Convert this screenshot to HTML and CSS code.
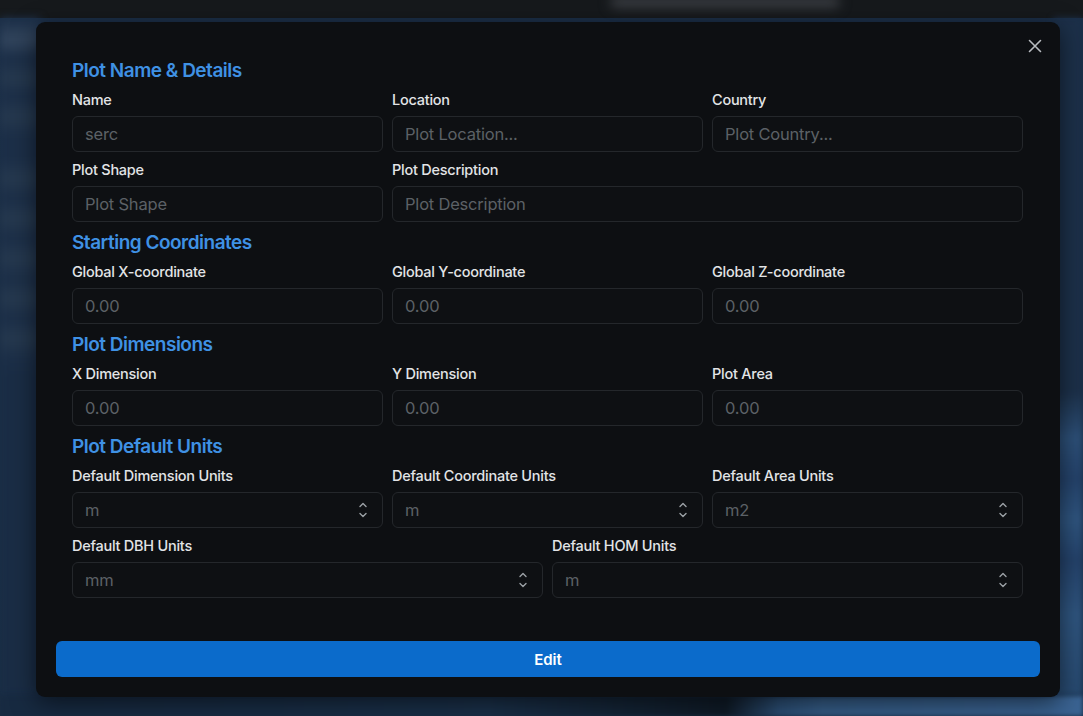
FILE: index.html
```html
<!DOCTYPE html>
<html lang="en">
<head>
<meta charset="utf-8">
<title>Edit Plot</title>
<link rel="stylesheet" href="styles.css">
</head>
<body>
<div class="backdrop">
  <div class="bd-top"><div class="bd-top-blob"></div></div>
  <div class="bd-main">
    <div class="bd-side"></div>
    <div class="bd-right"></div>
  </div>
  <div class="bd-bottom"></div>
</div>
<div class="overlay">
  <div class="modal">
    <button class="close" aria-label="Close">
      <svg width="14" height="14" viewBox="0 0 14 14"><path d="M1.5 1.5 L12.5 12.5 M12.5 1.5 L1.5 12.5" stroke="#b8bcc0" stroke-width="1.6" stroke-linecap="round" fill="none"/></svg>
    </button>
    <div class="content">
      <h2 class="section">Plot Name &amp; Details</h2>
      <div class="grid3">
        <div class="field"><label>Name</label><div class="input">serc</div></div>
        <div class="field"><label>Location</label><div class="input">Plot Location...</div></div>
        <div class="field"><label>Country</label><div class="input">Plot Country...</div></div>
        <div class="field"><label>Plot Shape</label><div class="input">Plot Shape</div></div>
        <div class="field span2"><label>Plot Description</label><div class="input">Plot Description</div></div>
      </div>
      <h2 class="section">Starting Coordinates</h2>
      <div class="grid3">
        <div class="field"><label>Global X-coordinate</label><div class="input">0.00</div></div>
        <div class="field"><label>Global Y-coordinate</label><div class="input">0.00</div></div>
        <div class="field"><label>Global Z-coordinate</label><div class="input">0.00</div></div>
      </div>
      <h2 class="section">Plot Dimensions</h2>
      <div class="grid3">
        <div class="field"><label>X Dimension</label><div class="input">0.00</div></div>
        <div class="field"><label>Y Dimension</label><div class="input">0.00</div></div>
        <div class="field"><label>Plot Area</label><div class="input">0.00</div></div>
      </div>
      <h2 class="section">Plot Default Units</h2>
      <div class="grid3">
        <div class="field"><label>Default Dimension Units</label><div class="input select">m<svg class="chev" width="10" height="18" viewBox="0 0 10 18"><path d="M2 5.5 L5 2.5 L8 5.5 M2 12.5 L5 15.5 L8 12.5" stroke="#9ca1a6" stroke-width="1.4" stroke-linecap="round" stroke-linejoin="round" fill="none"/></svg></div></div>
        <div class="field"><label>Default Coordinate Units</label><div class="input select">m<svg class="chev" width="10" height="18" viewBox="0 0 10 18"><path d="M2 5.5 L5 2.5 L8 5.5 M2 12.5 L5 15.5 L8 12.5" stroke="#9ca1a6" stroke-width="1.4" stroke-linecap="round" stroke-linejoin="round" fill="none"/></svg></div></div>
        <div class="field"><label>Default Area Units</label><div class="input select">m2<svg class="chev" width="10" height="18" viewBox="0 0 10 18"><path d="M2 5.5 L5 2.5 L8 5.5 M2 12.5 L5 15.5 L8 12.5" stroke="#9ca1a6" stroke-width="1.4" stroke-linecap="round" stroke-linejoin="round" fill="none"/></svg></div></div>
      </div>
      <div class="grid2">
        <div class="field"><label>Default DBH Units</label><div class="input select">mm<svg class="chev" width="10" height="18" viewBox="0 0 10 18"><path d="M2 5.5 L5 2.5 L8 5.5 M2 12.5 L5 15.5 L8 12.5" stroke="#9ca1a6" stroke-width="1.4" stroke-linecap="round" stroke-linejoin="round" fill="none"/></svg></div></div>
        <div class="field"><label>Default HOM Units</label><div class="input select">m<svg class="chev" width="10" height="18" viewBox="0 0 10 18"><path d="M2 5.5 L5 2.5 L8 5.5 M2 12.5 L5 15.5 L8 12.5" stroke="#9ca1a6" stroke-width="1.4" stroke-linecap="round" stroke-linejoin="round" fill="none"/></svg></div></div>
      </div>
    </div>
    <div class="footer">
      <button class="edit">Edit</button>
    </div>
  </div>
</div>
</body>
</html>
```

FILE: styles.css
```css
* { box-sizing: border-box; }
html, body { margin: 0; padding: 0; }
body {
  width: 1083px;
  height: 716px;
  overflow: hidden;
  position: relative;
  font-family: Inter, "Noto Sans", "Liberation Sans", sans-serif;
  background: #1a2c43;
}

/* blurred page behind the modal */
.backdrop {
  position: absolute;
  inset: 0;
  display: flex;
  flex-direction: column;
}
.bd-top {
  height: 18px;
  background: #16191c;
  position: relative;
  flex: none;
}
.bd-top-blob {
  position: absolute;
  left: 610px;
  top: -4px;
  width: 230px;
  height: 12px;
  background: #3a3d42;
  filter: blur(6px);
  border-radius: 6px;
}
.bd-main {
  flex: 1;
  display: flex;
  justify-content: space-between;
  background: linear-gradient(180deg, #1b2e47 0%, #1a2d45 60%, #182c44 100%);
}
.bd-side {
  width: 40px;
  background:
    linear-gradient(180deg,
      #1c2f48 0px, #33465e 22px, #1c2f48 40px,
      #26394f 60px, #1c2f48 78px,
      #26394f 98px, #1c2f48 118px,
      #1c2f48 140px, #26394f 160px, #1c2f48 180px,
      #26394f 200px, #1c2f48 220px,
      #26394f 240px, #1c2f48 262px,
      #26394f 280px, #1c2f48 300px,
      #26394f 320px, #1c2f48 340px,
      #1a2d45 360px, #1a2d45 100%);
  filter: blur(4px);
}
.bd-right {
  width: 30px;
  background: linear-gradient(180deg, #1c3049 0%, #1c3049 55%, #2d5078 62%, #24426a 68%, #2f557f 74%, #24426a 80%, #2f557f 88%, #27496f 100%);
  filter: blur(3px);
}
.bd-bottom {
  height: 20px;
  flex: none;
  background: linear-gradient(90deg, #172a41 0%, #1a3049 45%, #0f1a26 67%, #2b4e74 72%, #355c86 76%, #3a6392 100%);
  filter: blur(2px);
}

.overlay {
  position: absolute;
  inset: 0;
  padding: 22px 23px 19px 36px;
  display: flex;
  align-items: flex-start;
}

.modal {
  position: relative;
  width: 1024px;
  height: 675px;
  background: #0d0f12;
  border-radius: 9px;
  box-shadow: 0 6px 24px rgba(0, 0, 0, 0.55);
  display: flex;
  flex-direction: column;
}

.close {
  position: absolute;
  top: 17px;
  right: 18px;
  width: 14px;
  height: 14px;
  padding: 0;
  border: 0;
  background: transparent;
  display: flex;
}

.content {
  flex: 1;
  padding: 36px 37px 0 36px;
  display: flex;
  flex-direction: column;
  gap: 8px;
}

.section {
  margin: 0;
  height: 24px;
  line-height: 25px;
  font-size: 19px;
  font-weight: 600;
  color: #3f91e4;
  letter-spacing: -0.5px;
}

.grid3 {
  display: grid;
  grid-template-columns: repeat(3, 1fr);
  gap: 8px 9px;
}
.grid2 {
  display: grid;
  grid-template-columns: repeat(2, 1fr);
  gap: 9px;
}
.span2 { grid-column: span 2; }

.field {
  display: flex;
  flex-direction: column;
  gap: 6px;
}
.field label {
  height: 20px;
  line-height: 20px;
  font-size: 14.5px;
  font-weight: 500;
  color: #e2e4e6;
  letter-spacing: -0.25px;
}
.input {
  height: 36px;
  border: 1px solid #24272b;
  border-radius: 6px;
  background: #0e1013;
  padding: 0 12px;
  display: flex;
  align-items: center;
  justify-content: space-between;
  font-size: 16.5px;
  letter-spacing: -0.2px;
  color: #5c6166;
}
.input.select { padding-right: 14px; }
.chev { flex: none; }

.footer {
  padding: 0 20px 20px 20px;
  display: flex;
}
.edit {
  flex: 1;
  height: 36px;
  border: 0;
  border-radius: 6px;
  background: #0b6bcb;
  color: #ffffff;
  font-family: Inter, "Noto Sans", "Liberation Sans", sans-serif;
  font-size: 15px;
  font-weight: 600;
}
```
